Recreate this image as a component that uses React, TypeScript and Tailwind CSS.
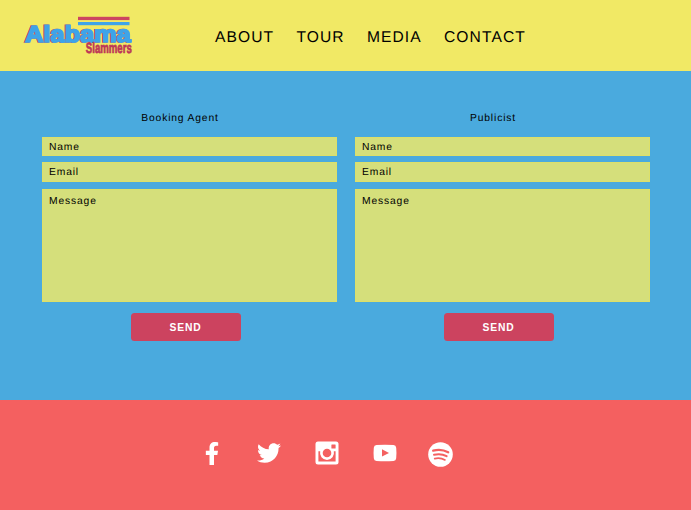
import { FaFacebookF, FaTwitter } from "react-icons/fa";

function Logo() {
  return (
    <svg className="block overflow-visible" width="120" height="45" viewBox="0 0 120 45" role="img" aria-label="Alabama Slammers">
      <rect x="58" y="4.8" width="51.5" height="3.3" fill="#cc4560" />
      <rect x="58" y="10" width="51.5" height="3.2" fill="#3fa4e8" />
      <text
        className="font-['Liberation_Sans',Arial,sans-serif] font-bold drop-shadow-[-0.8px_0.6px_0_#cc4560]"
        x="5.3"
        y="30.2"
        fontSize="23"
        textLength="105.5"
        lengthAdjust="spacingAndGlyphs"
        fill="#3fa4e8"
        stroke="#3fa4e8"
        strokeWidth="1.7"
      >
        Alabama
      </text>
      <text
        className="font-['Liberation_Sans',Arial,sans-serif] font-bold"
        x="65.8"
        y="40.6"
        fontSize="15"
        textLength="46"
        lengthAdjust="spacingAndGlyphs"
        fill="#bd3657"
        stroke="#bd3657"
        strokeWidth="0.7"
      >
        Slammers
      </text>
    </svg>
  );
}

function InstagramIcon() {
  return (
    <svg width="24" height="24" viewBox="0 0 24 24">
      <rect x="0.5" y="0.5" width="23" height="23" rx="2.5" fill="#fff" />
      <path d="M3.4 10.3h1.8a7 7 0 1 0 13.6 0h1.8v10.3H3.4z" fill="#f46060" />
      <circle cx="12" cy="12" r="4.3" fill="#f46060" />
      <rect x="16.4" y="3.4" width="4.2" height="4.2" rx="0.5" fill="#f46060" />
    </svg>
  );
}

function YoutubeIcon() {
  return (
    <svg width="24" height="18" viewBox="0 0 24 18">
      <path d="M3.5 1Q12 .3 20.5 1q2.5.2 2.7 2.8.5 5.2 0 10.4-.2 2.5-2.7 2.7-8.5.7-17 0Q1 16.7.8 14.2q-.5-5.2 0-10.4Q1 1.2 3.5 1Z" fill="#fff" />
      <path d="m9 5.3 7 3.6L9 12.5z" fill="#f46060" />
    </svg>
  );
}

function SpotifyIcon() {
  return (
    <svg width="25" height="25" viewBox="0 0 25 25" fill="none" stroke="#f46060" strokeLinecap="round">
      <circle cx="12.5" cy="12.5" r="12.3" fill="#fff" stroke="none" />
      <path d="M5.2 8.6q8-2.2 15 1.6" strokeWidth="2.3" />
      <path d="M6 12.8q6.8-1.8 12.6 1.4" strokeWidth="2" />
      <path d="M6.7 16.6q5.5-1.3 10.3 1.3" strokeWidth="1.7" />
    </svg>
  );
}

const field =
  "block w-full resize-none rounded-none border border-[#dde069] bg-[#d5df7b] px-[6.5px] text-[10.3px] tracking-[0.85px] text-black placeholder:text-black placeholder:opacity-100 outline-none [text-rendering:geometricPrecision]";

function ContactForm({ title }: { title: string }) {
  return (
    <form className="flex w-[295px] flex-col items-center" onSubmit={(e) => e.preventDefault()}>
      <h2 className="mr-[18px] h-5 text-[10.3px] leading-[21px] tracking-[0.85px]">{title}</h2>
      <input className={`${field} mt-[9px] h-[19px] pt-px`} placeholder="Name" />
      <input className={`${field} mt-1.5 h-5`} placeholder="Email" />
      <textarea className={`${field} mt-[7px] h-[113px] pt-1 leading-[15px]`} placeholder="Message" />
      <button className="mr-[7px] mt-[11px] h-[27.5px] w-[110px] rounded-[3.5px] bg-[#cc435f] pt-px text-[10.3px] font-bold tracking-[0.85px] text-white">SEND</button>
    </form>
  );
}

export default function App() {
  return (
    <div className="flex h-[510px] w-[691px] flex-col overflow-hidden bg-[#4aaade] font-['Liberation_Sans',Arial,sans-serif] text-black [text-rendering:geometricPrecision]">
      <header className="flex h-[71px] shrink-0 bg-[#f1e965] pl-5 pt-3">
        <Logo />
        <nav className="ml-[75px] flex h-[52px] items-center gap-[22.2px] text-[15.6px] tracking-[1.1px]">
          <a>ABOUT</a>
          <a>TOUR</a>
          <a>MEDIA</a>
          <a>CONTACT</a>
        </nav>
      </header>
      <main className="flex flex-1 justify-center gap-[18px] pt-[37px]">
        <ContactForm title="Booking Agent" />
        <ContactForm title="Publicist" />
      </main>
      <footer className="flex h-[110px] shrink-0 items-start bg-[#f46060] pl-[203px] pt-[41px] text-white">
        <span className="flex h-6 w-[18px] items-center justify-center">
          <FaFacebookF size={23} />
        </span>
        <span className="ml-9 flex h-6 items-center">
          <FaTwitter size={24} />
        </span>
        <span className="ml-[34px]">
          <InstagramIcon />
        </span>
        <span className="ml-[34px] mt-[3px]">
          <YoutubeIcon />
        </span>
        <span className="ml-[31px] mt-px">
          <SpotifyIcon />
        </span>
      </footer>
    </div>
  );
}
